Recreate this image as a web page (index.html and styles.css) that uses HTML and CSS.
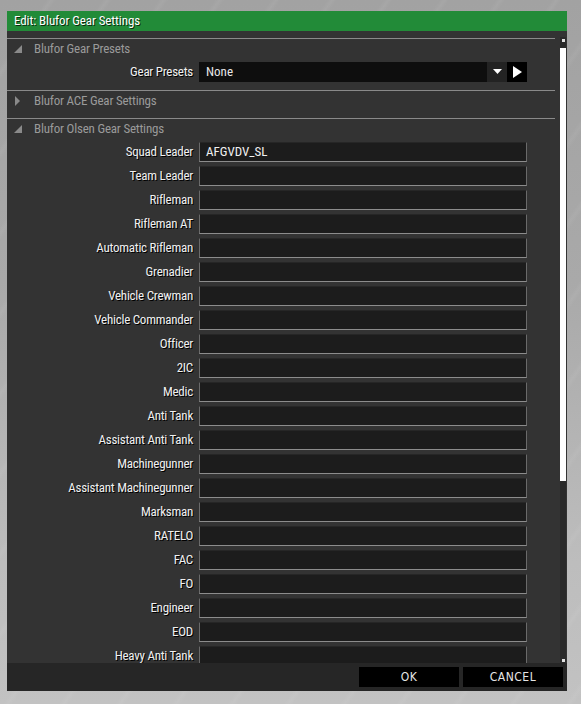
FILE: index.html
```html
<!DOCTYPE html>
<html>
<head>
<meta charset="utf-8">
<link rel="stylesheet" href="styles.css">
</head>
<body>
<div class="dialog">
  <div class="title">Edit: Blufor Gear Settings</div>
  <div class="content">
    <div class="main">
      <div class="section">
        <div class="header"><span class="tri-open"></span>Blufor Gear Presets</div>
        <div class="row">
          <div class="label">Gear Presets</div>
          <div class="combo">
            <div class="combo-value">None</div>
            <div class="combo-arrow"><svg width="9" height="6" viewBox="0 0 9 6"><path d="M0 0h9L4.5 5z" fill="#fff"/></svg></div>
          </div>
          <div class="play"><svg width="10" height="12" viewBox="0 0 10 12"><path d="M1 0v12l9-6z" fill="#fff"/></svg></div>
        </div>
      </div>
      <div class="section">
        <div class="header"><span class="tri-closed"></span>Blufor ACE Gear Settings</div>
      </div>
      <div class="section last">
        <div class="header"><span class="tri-open"></span>Blufor Olsen Gear Settings</div>
        <div class="rows">
          <div class="row"><div class="label">Squad Leader</div><div class="field">AFGVDV_SL</div></div>
          <div class="row"><div class="label">Team Leader</div><div class="field"></div></div>
          <div class="row"><div class="label">Rifleman</div><div class="field"></div></div>
          <div class="row"><div class="label">Rifleman AT</div><div class="field"></div></div>
          <div class="row"><div class="label">Automatic Rifleman</div><div class="field"></div></div>
          <div class="row"><div class="label">Grenadier</div><div class="field"></div></div>
          <div class="row"><div class="label">Vehicle Crewman</div><div class="field"></div></div>
          <div class="row"><div class="label">Vehicle Commander</div><div class="field"></div></div>
          <div class="row"><div class="label">Officer</div><div class="field"></div></div>
          <div class="row"><div class="label">2IC</div><div class="field"></div></div>
          <div class="row"><div class="label">Medic</div><div class="field"></div></div>
          <div class="row"><div class="label">Anti Tank</div><div class="field"></div></div>
          <div class="row"><div class="label">Assistant Anti Tank</div><div class="field"></div></div>
          <div class="row"><div class="label">Machinegunner</div><div class="field"></div></div>
          <div class="row"><div class="label">Assistant Machinegunner</div><div class="field"></div></div>
          <div class="row"><div class="label">Marksman</div><div class="field"></div></div>
          <div class="row"><div class="label">RATELO</div><div class="field"></div></div>
          <div class="row"><div class="label">FAC</div><div class="field"></div></div>
          <div class="row"><div class="label">FO</div><div class="field"></div></div>
          <div class="row"><div class="label">Engineer</div><div class="field"></div></div>
          <div class="row"><div class="label">EOD</div><div class="field"></div></div>
          <div class="row"><div class="label">Heavy Anti Tank</div><div class="field"></div></div>
        </div>
      </div>
    </div>
    <div class="scrollbar">
      <div class="sb-btn"></div>
      <div class="sb-track"><div class="sb-thumb"></div></div>
      <div class="sb-btn"></div>
    </div>
  </div>
  <div class="footer">
    <div class="btn">OK</div>
    <div class="btn">CANCEL</div>
  </div>
</div>
</body>
</html>
```

FILE: styles.css
```css
html, body {
  margin: 0;
  padding: 0;
}
body {
  width: 581px;
  height: 704px;
  overflow: hidden;
  background:
    repeating-linear-gradient(125deg, rgba(255,255,255,0) 0px, rgba(255,255,255,0) 38px, rgba(255,255,255,0.05) 42px, rgba(255,255,255,0) 46px),
    linear-gradient(180deg, #a2a2a2 0%, #a9a9a9 40%, #bdbdbd 80%, #c2c2c2 100%);
  font-family: "Liberation Sans Narrow", "Roboto Condensed", "Liberation Sans", sans-serif;
  font-size: 13px;
  padding-top: 11px;
  box-sizing: border-box;
}
.dialog {
  margin-left: 7px;
  width: 560px;
  height: 680px;
  display: flex;
  flex-direction: column;
}
.title {
  height: 20px;
  line-height: 20px;
  background: #228b38;
  color: #fff;
  padding-left: 7px;
  font-size: 13px;
  letter-spacing: -0.1px;
  text-shadow: 1px 1px 0 #0a2a10;
}
.content {
  height: 632px;
  background: #333333;
  display: flex;
  overflow: hidden;
}
.main {
  width: 548px;
  padding-top: 7px;
}
.section {
  border-top: 1px solid #8a8a8a;
  padding-bottom: 8px;
}
.section.last {
  padding-bottom: 0;
}
.header {
  height: 19px;
  line-height: 19px;
  color: #9a9a9a;
  font-size: 13px;
  letter-spacing: -0.2px;
  display: flex;
  align-items: center;
  padding-left: 6px;
}
.tri-open {
  width: 0;
  height: 0;
  border-left: 8px solid transparent;
  border-bottom: 8px solid #8a8a8a;
  margin-right: 12px;
  margin-left: 1px;
}
.tri-closed {
  width: 0;
  height: 0;
  border-top: 5px solid transparent;
  border-bottom: 5px solid transparent;
  border-left: 5px solid #8a8a8a;
  margin-right: 14px;
  margin-left: 2px;
}
.row {
  display: flex;
  align-items: center;
  height: 20px;
  margin-top: 4px;
}
.label {
  width: 186px;
  text-align: right;
  color: #f0f0f0;
  text-shadow: 1px 1px 0 #000;
  margin-right: 6px;
  white-space: nowrap;
  letter-spacing: -0.25px;
  position: relative;
  top: -1px;
}
.combo {
  width: 308px;
  height: 20px;
  display: flex;
  background: #0e0e0e;
}
.combo-value {
  flex: 1;
  color: #e8e8e8;
  padding-left: 7px;
  line-height: 20px;
}
.combo-arrow {
  width: 20px;
  background: #232323;
  display: flex;
  align-items: center;
  justify-content: center;
}
.play {
  width: 20px;
  height: 20px;
  background: #000;
  display: flex;
  align-items: center;
  justify-content: center;
}
.field {
  height: 18px;
  width: 320px;
  background: #1c1c1c;
  border-top: 1px solid #262626;
  border-left: 1px solid #6a6a6a;
  border-right: 1px solid #6a6a6a;
  border-bottom: 1px solid #8c8c8c;
  color: #f0f0f0;
  padding-left: 6px;
  line-height: 18px;
}
.scrollbar {
  width: 6px;
  margin-left: 5px;
  margin-top: 6px;
  display: flex;
  flex-direction: column;
  background: #2a2a2a;
}
.sb-btn {
  height: 6px;
  display: flex;
  align-items: center;
  justify-content: center;
}
.sb-btn::after {
  content: "";
  width: 3px;
  height: 3px;
  background: #e0e0e0;
}
.sb-track {
  flex: 1;
  padding-top: 5px;
}
.sb-thumb {
  height: 433px;
  background: #ffffff;
}
.footer {
  height: 28px;
  background: #262626;
  display: flex;
  justify-content: flex-end;
  align-items: flex-start;
  padding: 4px 4px 0 0;
  box-sizing: border-box;
  gap: 4px;
}
.btn {
  width: 100px;
  height: 20px;
  line-height: 20px;
  background: #000;
  color: #e6e6e6;
  text-align: center;
  font-family: "DejaVu Sans Condensed", "DejaVu Sans", sans-serif;
  font-size: 12px;
  letter-spacing: 0.5px;
}
```
